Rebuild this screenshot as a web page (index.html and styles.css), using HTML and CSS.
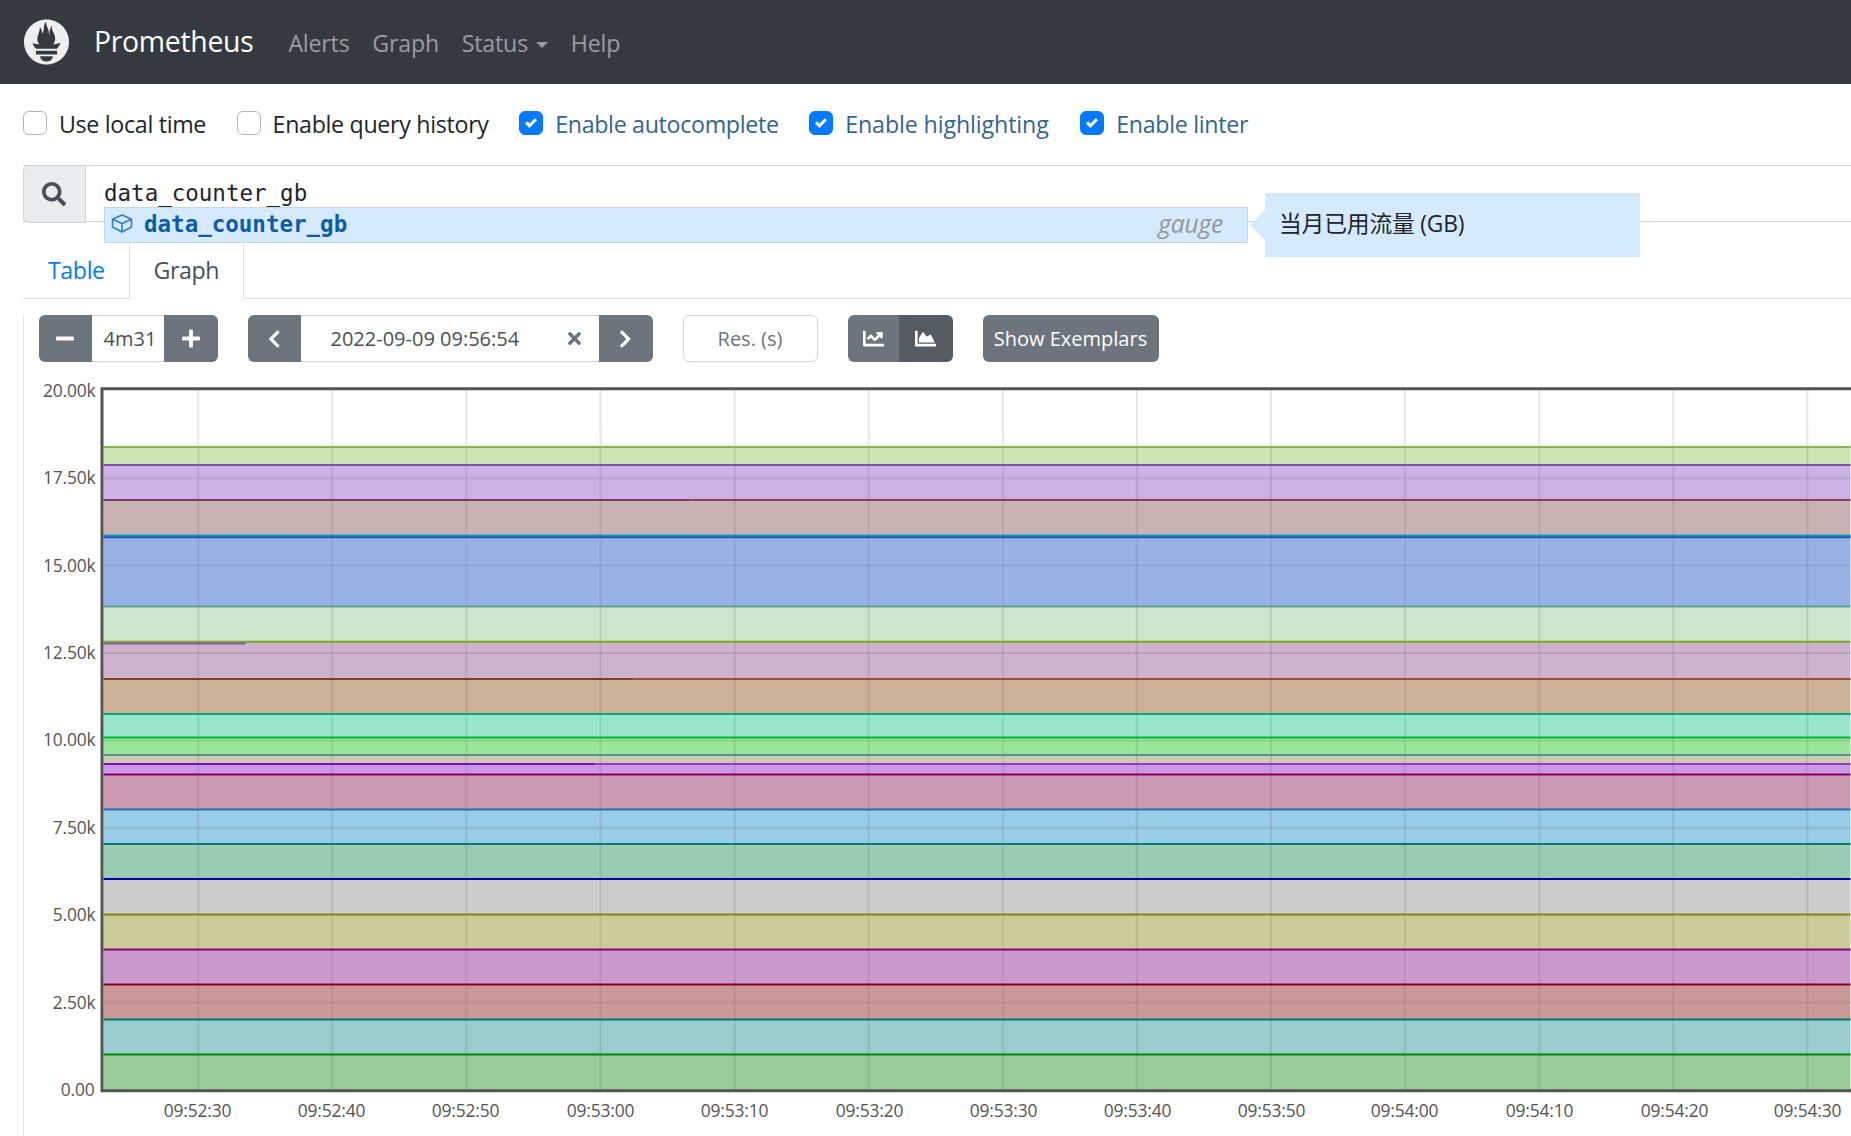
FILE: index.html
```html
<!DOCTYPE html>
<html lang="en">
<head>
<meta charset="utf-8">
<title>Prometheus Time Series Collection and Processing Server</title>
<link rel="stylesheet" href="styles.css">
</head>
<body>
<nav class="navbar">
  <svg class="logo" viewBox="0 0 113.33 114.67"><path fill="#eeeeee" d="M56.667,0.667C25.372,0.667,0,26.036,0,57.332c0,31.295,25.372,56.666,56.667,56.666s56.666-25.371,56.666-56.666C113.333,26.036,87.961,0.667,56.667,0.667z M56.667,106.722c-8.904,0-16.123-5.948-16.123-13.283H72.79C72.79,100.773,65.571,106.722,56.667,106.722z M83.297,89.04H30.034v-9.658h53.264V89.04z M83.106,74.411H30.186c-0.176-0.203-0.356-0.403-0.526-0.609c-5.452-6.62-6.736-10.076-7.983-13.598c-0.021-0.116,6.611,1.355,11.314,2.413c0,0,2.42,0.56,5.958,1.205c-3.397-3.982-5.414-9.044-5.414-14.218c0-11.359,8.712-21.285,5.569-29.308c3.059,0.249,6.331,6.456,6.552,16.161c3.252-4.494,4.613-12.701,4.613-17.733c0-5.21,3.433-11.262,6.867-11.469c-3.061,5.045,0.793,9.37,4.219,20.099c1.285,4.03,1.121,10.812,2.113,15.113C63.797,33.534,65.333,20.5,71,16c-2.5,5.667,0.37,12.758,2.333,16.167c3.167,5.5,5.087,9.667,5.087,17.548c0,5.284-1.951,10.259-5.242,14.148c3.742-0.702,6.326-1.335,6.326-1.335l12.152-2.371C91.657,60.156,89.891,67.418,83.106,74.411z"/></svg>
  <a class="brand">Prometheus</a>
  <a class="nav-link">Alerts</a>
  <a class="nav-link">Graph</a>
  <a class="nav-link">Status<span class="caret"></span></a>
  <a class="nav-link">Help</a>
</nav>
<main class="page">
  <div class="options">
    <label class="check"><span class="box"></span>Use local time</label>
    <label class="check"><span class="box"></span>Enable query history</label>
    <label class="check"><span class="box on"><svg viewBox="0 0 8 8"><path fill="#fff" d="M6.564.75l-3.59 3.612-1.538-1.55L0 4.26 2.974 7.25 8 2.193z"/></svg></span><span class="on-text">Enable autocomplete</span></label>
    <label class="check wide-text"><span class="box on"><svg viewBox="0 0 8 8"><path fill="#fff" d="M6.564.75l-3.59 3.612-1.538-1.55L0 4.26 2.974 7.25 8 2.193z"/></svg></span><span class="on-text">Enable highlighting</span></label>
    <label class="check"><span class="box on"><svg viewBox="0 0 8 8"><path fill="#fff" d="M6.564.75l-3.59 3.612-1.538-1.55L0 4.26 2.974 7.25 8 2.193z"/></svg></span><span class="on-text">Enable linter</span></label>
  </div>
  <div class="query">
    <div class="prepend"><svg viewBox="0 0 512 512"><path fill="#495057" d="M505 442.7L405.3 343c-4.5-4.5-10.6-7-17-7H372c27.6-35.3 44-79.7 44-128C416 93.1 322.9 0 208 0S0 93.1 0 208s93.1 208 208 208c48.3 0 92.7-16.4 128-44v16.3c0 6.4 2.5 12.5 7 17l99.7 99.7c9.4 9.4 24.6 9.4 33.9 0l28.3-28.3c9.4-9.4 9.4-24.6.1-34zM208 336c-70.7 0-128-57.2-128-128 0-70.7 57.2-128 128-128 70.7 0 128 57.2 128 128 0 70.7-57.2 128-128 128z"/></svg></div>
    <div class="editor">data_counter_gb</div>
    <div class="suggest">
      <svg class="cube" viewBox="0 0 22 19"><path fill="none" stroke="#2f80c8" stroke-width="1.6" stroke-linejoin="round" d="M11 1 20.5 5.2V13L11 18 1.5 13V5.2ZM1.5 5.2 11 9.6 20.5 5.2M11 9.6V18"/></svg>
      <span class="suggest-name">data_counter_gb</span>
      <span class="suggest-type">gauge</span>
    </div>
    <div class="info"><span class="info-text">当月已用流量 (GB)</span></div>
  </div>
  <div class="tabs">
    <a class="tab link">Table</a>
    <a class="tab active">Graph</a>
  </div>
  <section class="pane">
    <div class="controls">
      <div class="group">
        <span class="btn icon"><svg class="i-plus" viewBox="0 0 448 512"><path fill="#fff" d="M416 208H32c-17.67 0-32 14.33-32 32v32c0 17.67 14.33 32 32 32h384c17.67 0 32-14.33 32-32v-32c0-17.67-14.33-32-32-32z"/></svg></span>
        <span class="field range">4m31</span>
        <span class="btn icon wide"><svg class="i-plus" viewBox="0 0 448 512"><path fill="#fff" d="M416 208H272V64c0-17.67-14.33-32-32-32h-32c-17.67 0-32 14.33-32 32v144H32c-17.67 0-32 14.33-32 32v32c0 17.67 14.33 32 32 32h144v144c0 17.67 14.33 32 32 32h32c17.67 0 32-14.33 32-32V304h144c17.67 0 32-14.33 32-32v-32c0-17.67-14.33-32-32-32z"/></svg></span>
      </div>
      <div class="group">
        <span class="btn icon"><svg class="i-chev" viewBox="0 0 320 512"><path fill="#fff" d="M34.52 239.03L228.87 44.69c9.37-9.37 24.57-9.37 33.94 0l22.67 22.67c9.36 9.36 9.37 24.52.04 33.9L131.49 256l154.02 154.75c9.34 9.38 9.32 24.54-.04 33.9l-22.67 22.67c-9.37 9.37-24.57 9.37-33.94 0L34.52 272.97c-9.37-9.37-9.37-24.57 0-33.94z"/></svg></span>
        <span class="field date">2022-09-09 09:56:54<svg class="i-times" viewBox="0 0 352 512"><path fill="#6c757d" d="M242.72 256l100.07-100.07c12.28-12.28 12.28-32.19 0-44.48l-22.24-22.24c-12.28-12.28-32.19-12.28-44.48 0L176 189.28 75.93 89.21c-12.28-12.28-32.19-12.28-44.48 0L9.21 111.45c-12.28 12.28-12.28 32.19 0 44.48L109.28 256 9.21 356.07c-12.28 12.28-12.28 32.19 0 44.48l22.24 22.24c12.28 12.28 32.2 12.28 44.48 0L176 322.72l100.07 100.07c12.28 12.28 32.2 12.28 44.48 0l22.24-22.24c12.28-12.28 12.28-32.19 0-44.48L242.72 256z"/></svg></span>
        <span class="btn icon wide"><svg class="i-chev" viewBox="0 0 320 512"><path fill="#fff" d="M285.476 272.971L91.132 467.314c-9.373 9.373-24.569 9.373-33.941 0l-22.667-22.667c-9.357-9.357-9.375-24.522-.04-33.901L188.505 256 34.484 101.255c-9.335-9.379-9.317-24.544.04-33.901l22.667-22.667c9.373-9.373 24.569-9.373 33.941 0L285.475 239.03c9.373 9.372 9.373 24.568.001 33.941z"/></svg></span>
      </div>
      <span class="field res">Res. (s)</span>
      <div class="group">
        <span class="btn icon mode"><svg class="i-chart" viewBox="0 0 512 512"><path fill="#fff" d="M496 384H64V80c0-8.84-7.16-16-16-16H16C7.16 64 0 71.16 0 80v336c0 17.67 14.33 32 32 32h464c8.84 0 16-7.16 16-16v-32c0-8.84-7.16-16-16-16zM464 96H345.94c-21.38 0-32.09 25.85-16.97 40.97l32.4 32.4L288 242.75l-73.37-73.37c-12.5-12.5-32.76-12.5-45.25 0l-68.69 68.69c-6.25 6.25-6.25 16.38 0 22.63l22.62 22.62c6.25 6.25 16.38 6.25 22.63 0L192 237.25l73.37 73.37c12.5 12.5 32.76 12.5 45.25 0l96-96 32.4 32.4c15.12 15.12 40.97 4.41 40.97-16.97V112c0-8.84-7.16-16-16-16z"/></svg></span>
        <span class="btn icon mode pressed"><svg class="i-chart" viewBox="0 0 512 512"><path fill="#fff" d="M500 384c6.6 0 12 5.4 12 12v40c0 6.6-5.4 12-12 12H12c-6.6 0-12-5.4-12-12V76c0-6.6 5.4-12 12-12h40c6.6 0 12 5.4 12 12v308h436zM372.7 159.5L288 216l-85.3-113.7c-5.1-6.8-15.5-6.3-19.9 1L96 248v104h384l-89.9-187.8c-3.2-6.5-11.4-8.7-17.4-4.7z"/></svg></span>
      </div>
      <span class="btn exemplars">Show Exemplars</span>
    </div>
    <svg class="chart" viewBox="24.5 370 1826.5 766">
      <g>
        <rect x="104" y="447" width="1747" height="18" fill="#cbe6b2"/>
        <rect x="104" y="465" width="1747" height="35" fill="#cbb2e6"/>
        <rect x="104" y="500" width="1747" height="35" fill="#c9b2b2"/>
        <rect x="104" y="535" width="1747" height="2" fill="#66c0cc"/>
        <rect x="104" y="537" width="1747" height="69.5" fill="#99b2e6"/>
        <rect x="104" y="606.5" width="1747" height="35.5" fill="#cce6cc"/>
        <rect x="104" y="642" width="1747" height="37" fill="#ccb2cc"/>
        <rect x="104" y="679" width="1747" height="35" fill="#ccb299"/>
        <rect x="104" y="714" width="1747" height="23.5" fill="#99e6cc"/>
        <rect x="104" y="737.5" width="1747" height="17.5" fill="#99e699"/>
        <rect x="104" y="755" width="1747" height="9" fill="#ccccb2"/>
        <rect x="104" y="764" width="1747" height="10.5" fill="#cc99e6"/>
        <rect x="104" y="774.5" width="1747" height="35" fill="#cc99b2"/>
        <rect x="104" y="809.5" width="1747" height="34.5" fill="#99cce6"/>
        <rect x="104" y="844" width="1747" height="35" fill="#99ccb2"/>
        <rect x="104" y="879" width="1747" height="35.5" fill="#cccccc"/>
        <rect x="104" y="914.5" width="1747" height="35" fill="#cccc99"/>
        <rect x="104" y="949.5" width="1747" height="35" fill="#cc99cc"/>
        <rect x="104" y="984.5" width="1747" height="35" fill="#cc9999"/>
        <rect x="104" y="1019.5" width="1747" height="35" fill="#99cccc"/>
        <rect x="104" y="1054.5" width="1747" height="36" fill="#99cc99"/>
      </g>
      <g class="grid">
        <path d="M198.7 390V1090M332.8 390V1090M466.9 390V1090M601 390V1090M735.1 390V1090M869.2 390V1090M1003.3 390V1090M1137.4 390V1090M1271.5 390V1090M1405.6 390V1090M1539.7 390V1090M1673.8 390V1090M1807.9 390V1090"/>
        <path d="M104 478.2H1851M104 565.6H1851M104 653H1851M104 740.4H1851M104 827.8H1851M104 915.2H1851M104 1002.6H1851"/>
      </g>
      <g class="series">
        <path stroke="#7fb84d" d="M104 447H1851"/>
        <path stroke="#7a55a6" d="M104 465H1851"/>
        <path stroke="#7e3b5f" d="M104 500H691"/><path stroke="#8a3f4d" stroke-width="1.2" d="M691 500H1851"/>
        <path stroke="#00a0b8" d="M104 535.4H1851"/>
        <path stroke="#2255b8" d="M104 537.2H1851"/>
        <path stroke="#5fa098" stroke-width="1.4" d="M104 606.5H1851"/>
        <path stroke="#7ea32a" d="M104 641.8H1851"/>
        <path stroke="#8a5a90" stroke-width="1" d="M104 643.4H246"/>
        <path stroke="#7f3f1c" d="M104 679H634"/><path stroke="#9a5030" stroke-width="1.2" d="M634 679H1851"/>
        <path stroke="#00a878" d="M104 714H1851"/>
        <path stroke="#00b833" d="M104 737.5H1851"/>
        <path stroke="#5f8f8f" d="M104 755H1851"/>
        <path stroke="#8800cc" d="M104 764H596"/><path stroke="#9a33cc" stroke-width="1.4" d="M596 764H1851"/>
        <path stroke="#88006a" d="M104 774.5H1851"/>
        <path stroke="#1f70b8" d="M104 809.5H1851"/>
        <path stroke="#007f70" d="M104 844H1851"/>
        <path stroke="#0000aa" d="M104 879H1851"/>
        <path stroke="#88881a" d="M104 914.5H1851"/>
        <path stroke="#88007f" d="M104 949.5H1851"/>
        <path stroke="#880022" d="M104 984.5H1851"/>
        <path stroke="#007777" d="M104 1019.5H1851"/>
        <path stroke="#008800" d="M104 1054.5H1851"/>
      </g>
      <path class="frame" d="M1860 388.8H102.5V1090.8H1860"/>
      <g class="yaxis">
        <text x="96" y="396.5">20.00k</text>
        <text x="96" y="484">17.50k</text>
        <text x="96" y="571.5">15.00k</text>
        <text x="96" y="659">12.50k</text>
        <text x="96" y="746">10.00k</text>
        <text x="96" y="833.5">7.50k</text>
        <text x="96" y="921">5.00k</text>
        <text x="96" y="1008.5">2.50k</text>
        <text x="95" y="1096">0.00</text>
      </g>
      <g class="xaxis">
        <text x="198" y="1117">09:52:30</text>
        <text x="332" y="1117">09:52:40</text>
        <text x="466" y="1117">09:52:50</text>
        <text x="601" y="1117">09:53:00</text>
        <text x="735" y="1117">09:53:10</text>
        <text x="870" y="1117">09:53:20</text>
        <text x="1004" y="1117">09:53:30</text>
        <text x="1138" y="1117">09:53:40</text>
        <text x="1272" y="1117">09:53:50</text>
        <text x="1405" y="1117">09:54:00</text>
        <text x="1540" y="1117">09:54:10</text>
        <text x="1675" y="1117">09:54:20</text>
        <text x="1808" y="1117">09:54:30</text>
      </g>
    </svg>
  </section>
</main>
</body>
</html>
```
FILE: styles.css
```css
* { box-sizing: border-box; }
html, body { margin: 0; height: 1136px; overflow: hidden; background: #fff; }
body { font-family: "Open Sans", "Noto Sans CJK SC", sans-serif; font-size: 23.2px; letter-spacing: -.2px; color: #212529; }

.navbar { display: flex; align-items: center; height: 84px; padding-left: 24px; background: #343a40; }
.logo { width: 45px; height: 46px; margin-right: 25px; }
.brand { font-size: 28.4px; letter-spacing: -.3px; color: #fff; margin-right: 35px; margin-top: -3px; }
.nav-link { color: rgba(255,255,255,.5); margin-right: 22.8px; margin-top: 2px; }
.caret { display: inline-block; margin-left: 8px; vertical-align: 4px; border-top: 6px solid; border-left: 6.5px solid transparent; border-right: 6.5px solid transparent; }

.page { padding-left: 23px; }
.options { display: flex; height: 81px; padding-top: 21.6px; letter-spacing: -.3px; }
.check { display: flex; align-items: center; height: 36px; margin-right: 30.5px; gap: 12px; }
.check.wide-text { margin-right: 31.5px; letter-spacing: -.1px; }
.box { display: flex; align-items: center; justify-content: center; width: 24px; height: 24px; margin-top: -2px; border: 1.5px solid #adb5bd; border-radius: 6px; background: #fff; }
.box.on { background: #007bff; border-color: #007bff; }
.box svg { width: 12px; height: 12px; }
.on-text { color: #2f6598; }

.query { position: relative; display: flex; height: 57px; border: solid #ced4da; border-width: 1.5px 0; }
.prepend { display: flex; align-items: center; justify-content: center; width: 62.5px; margin-top: -1.5px; margin-bottom: -1.5px; background: #e9ecef; border: 1.5px solid #ced4da; border-radius: 6px 0 0 6px; }
.prepend svg { width: 24px; height: 24px; }
.editor { padding: 12px 0 0 18.5px; font-family: "DejaVu Sans Mono", monospace; font-size: 22.5px; line-height: 30px; letter-spacing: 0; }
.suggest { position: absolute; left: 81px; top: 40.5px; display: flex; align-items: center; width: 1144px; height: 36px; padding: 0 24px 0 6px; background: #d5e9ff; border: 1.5px solid #c7d5e6; }
.cube { width: 22px; height: 19px; margin-right: 11px; margin-top: -3px; }
.suggest-name { margin-top: -2px; font-family: "DejaVu Sans Mono", monospace; font-size: 22.5px; font-weight: 700; color: #0b5cad; letter-spacing: 0; }
.suggest-type { margin-left: auto; margin-top: -2px; font-style: italic; color: #979797; font-size: 24.6px; }
.info { position: absolute; left: 1242px; top: 26.5px; display: flex; align-items: center; width: 375px; height: 64px; padding: 0 0 4px 14px; background: #d5e9ff; }
.info::before { content: ""; position: absolute; left: -15px; top: 17px; border-right: 15px solid #d5e9ff; border-top: 15px solid transparent; border-bottom: 15px solid transparent; }
.info-text { font-size: 22.8px; color: #212529; }

.tabs { display: flex; align-items: flex-end; height: 77px; border-bottom: 1.5px solid #dee2e6; letter-spacing: -.4px; }
.tab { display: block; height: 63px; margin-bottom: -1.5px; padding: 16px 24px 0; border: 1.5px solid transparent; }
.tab.link { color: #007bff; width: 105.5px; }
.tab.active { color: #495057; width: 115.5px; background: #fff; border-color: #dee2e6 #dee2e6 #fff; }

.pane { height: 837px; border-left: 1.5px solid #dee2e6; }
.controls { display: flex; align-items: stretch; height: 47px; margin: 16px 0 0 14.5px; font-size: 20px; letter-spacing: 0; }
.group { display: flex; border-radius: 6px; overflow: hidden; }
.group + .group, .group + .field, .field + .group, .group + .btn { margin-left: 30px; }
.btn { display: flex; align-items: center; justify-content: center; background: #6c757d; color: #fff; }
.icon { width: 53px; }
.icon.wide { width: 54px; }
.icon.mode { width: 51px; }
.icon.mode.pressed { width: 54px; background: #545b62; }
.exemplars { width: 176px; border-radius: 6px; }
.field { display: flex; align-items: center; border: solid #ced4da; border-width: 1.5px 0; color: #495057; background: #fff; }
.range { width: 72px; padding-left: 12px; }
.date { position: relative; width: 298px; padding-left: 30px; }
.res { justify-content: center; width: 135px; border: 1.5px solid #ced4da; border-radius: 6px; color: #6c757d; }
.i-plus { width: 18px; height: 21px; }
.i-chev { width: 12.5px; height: 22px; }
.i-times { position: absolute; right: 18px; top: 13px; width: 13px; height: 19px; }
.i-chart { width: 21px; height: 21px; }

.chart { display: block; width: 1826.5px; height: 766px; margin-top: 8px; }
.grid path { fill: none; stroke: rgba(84,84,84,.15); stroke-width: 2; }
.series path { fill: none; stroke-width: 2; }
.frame { fill: none; stroke: #545454; stroke-width: 3; }
.yaxis text, .xaxis text { font-family: "Open Sans", sans-serif; font-size: 17.4px; letter-spacing: -.15px; fill: #545454; }
.yaxis text { text-anchor: end; }
.xaxis text { text-anchor: middle; }
```
